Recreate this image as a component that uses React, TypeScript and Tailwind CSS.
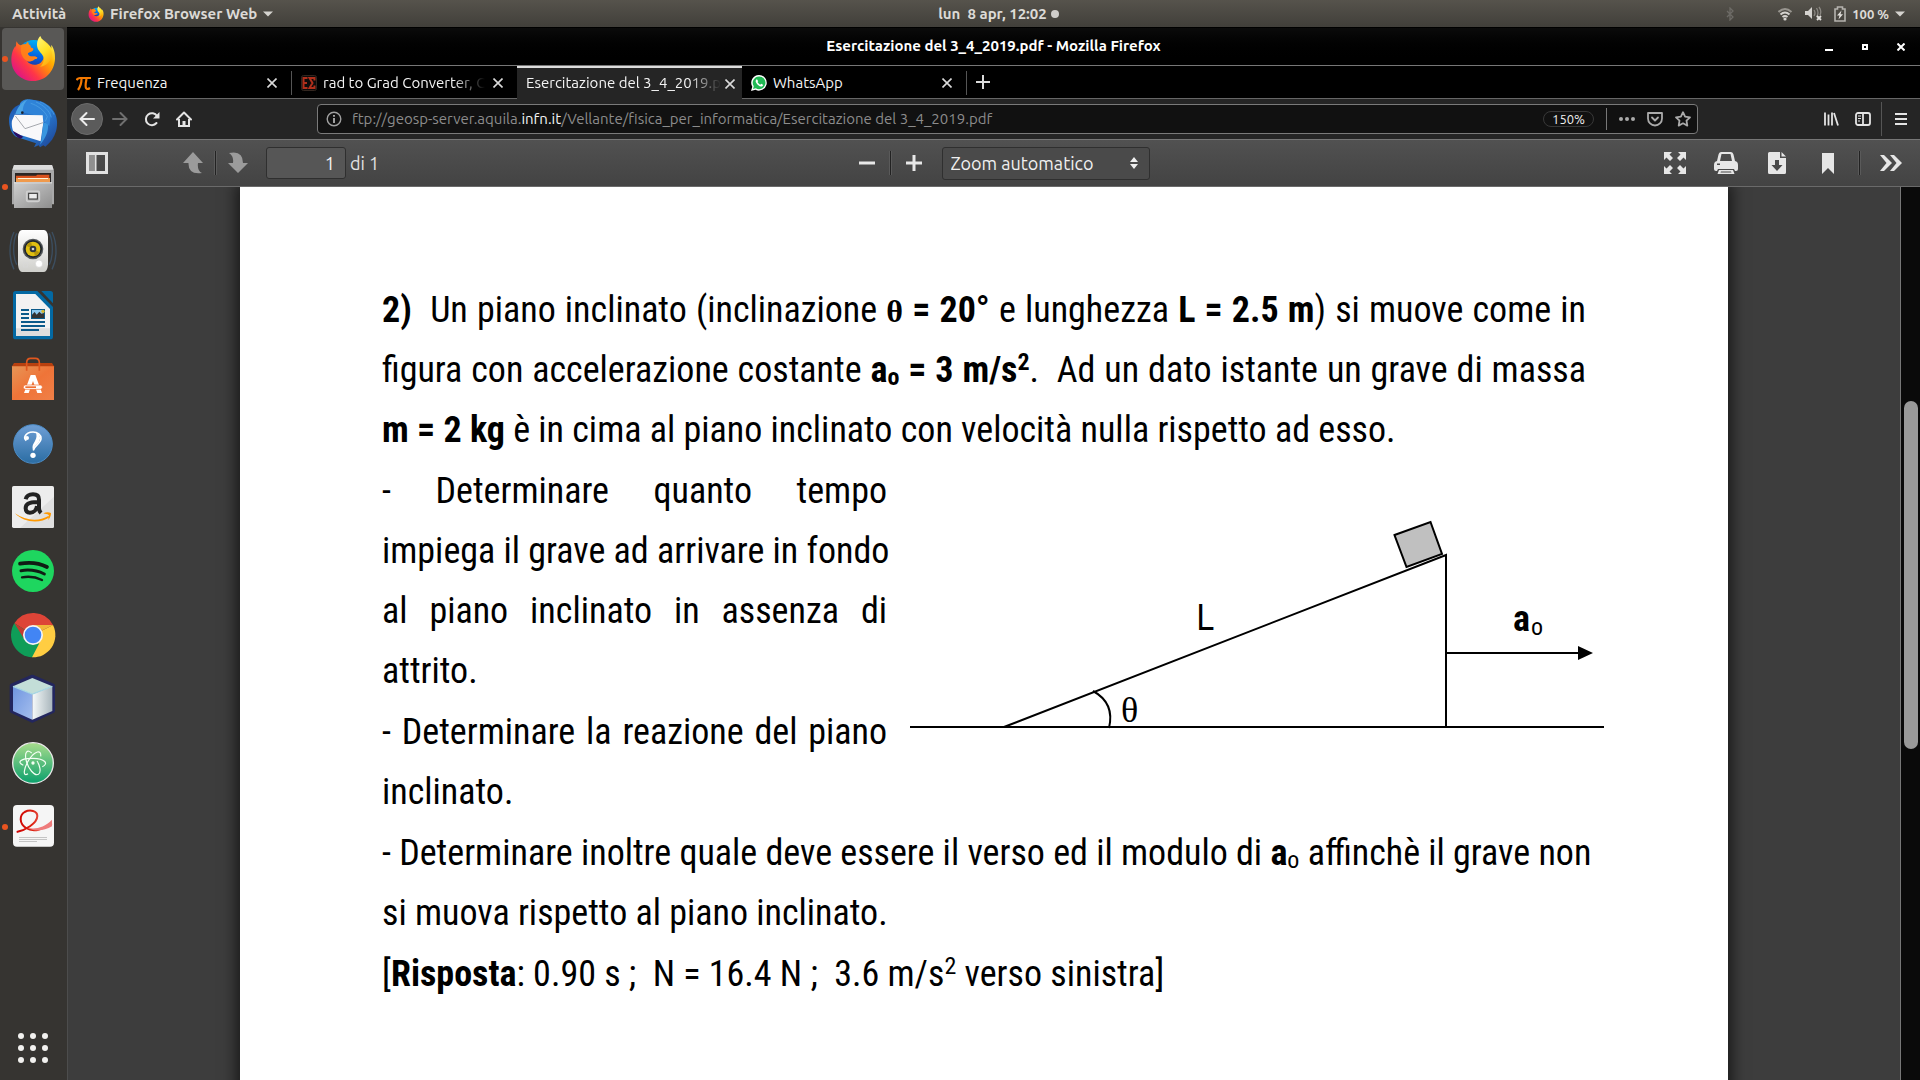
import React from 'react';

/* ---------- Dock icons ---------- */

const FirefoxShape = () => (
  <>
    <defs>
      <linearGradient id="ffBody" x1="1" y1="0.1" x2="0.1" y2="0.9">
        <stop offset="0.05" stopColor="#fff44f" />
        <stop offset="0.3" stopColor="#ffb000" />
        <stop offset="0.5" stopColor="#ff7a16" />
        <stop offset="0.7" stopColor="#ff3647" />
        <stop offset="1" stopColor="#d9108f" />
      </linearGradient>
      <linearGradient id="ffGlobe" x1="0.6" y1="0" x2="0.4" y2="1">
        <stop offset="0" stopColor="#00b3f4" />
        <stop offset="0.5" stopColor="#0560e0" />
        <stop offset="1" stopColor="#2b1a78" />
      </linearGradient>
      <linearGradient id="ffTail" x1="0.3" y1="0" x2="0.7" y2="1">
        <stop offset="0" stopColor="#fff36e" />
        <stop offset="0.5" stopColor="#ffe226" />
        <stop offset="1" stopColor="#ffa60e" />
      </linearGradient>
    </defs>
    <circle cx="101" cy="110" r="50" fill="url(#ffGlobe)" />
    <path
      d="M50 64c2 6 6 10 11 12 6-3 12-4 18-3-1-2 1-5 4-8 0 6 3 10 8 12-1 3 0 6 6 8 3 1 3 4 0 7-4 4-11 3-14 8 0 4 3 8 7 9 7 2 15-2 21 3 1 3-3 6-8 6-6 6-16 8-22 6 10 12 28 14 41 4 12-10 14-28 3-43 7 2 12 7 15 13-1-22-14-30-15-42 14 10 25 20 30 30-2-5-1-11-1-11 6 8 12 22 11 42-2 38-30 66-65 66-37 0-66-28-66-64 0-24 9-38 13-42 0 2 0 4 1 6 0-7 0-14 2-19z"
      fill="url(#ffBody)"
    />
    <path d="M64 76c8-4 15-3 18-3 0-3 2-6 3-7 0 6 3 9 7 11-1 3 0 6 6 8 3 1 3 4 0 7-4 4-11 3-14 8 0 4 3 8 7 9 7 2 15-2 21 3 1 3-3 6-8 6-6 6-14 8-22 5-14-6-24-25-18-47z" fill="#ff8418" opacity="0.85" />
    <path d="M121 48c-10 10-11 24-9 34 3 12 14 18 18 28 4 12-2 24-10 30 22-2 36-20 36-38-1-24-27-32-35-54z" fill="url(#ffTail)" />
  </>
);

const ThunderbirdIcon = () => (
  <>
    <defs>
      <linearGradient id="tb" x1="0" y1="0" x2="1" y2="1">
        <stop offset="0" stopColor="#1a4fa8" />
        <stop offset="0.5" stopColor="#2a7fd6" />
        <stop offset="1" stopColor="#1c3f8f" />
      </linearGradient>
    </defs>
    <path d="M82 240c30-4 62 8 78 32 12 16 14 40 8 62-5 18-16 34-32 46l-6-4-10 6-4-6-14 6 6-12-60-20c-12-8-22-28-21-54 1-10 5-24 19-36z" fill="url(#tb)" />
    <path d="M60 250c6-10 18-14 28-12 22 2 46 14 66 34l-6 46-20-16-28-18-40-8z" fill="#2f83d8" />
    <path d="M92 250c20 6 40 20 50 40l-6 14M108 246c24 10 40 26 46 46M120 246c20 8 34 20 42 38" fill="none" stroke="#4a9fe4" strokeWidth="2.500" />
    <path d="M44 284l84 2 2 22-8 56-78-24c-8-8-10-30-8-38z" fill="#f8f8fa" />
    <path d="M46 288l29 38 54-18" fill="none" stroke="#a5a8ae" strokeWidth="3" />
    <path d="M46 282c8-24 22-38 38-44-14 12-18 32-14 44z" fill="#4aa4e6" />
    <circle cx="67" cy="278" r="4" fill="#1b2230" />
    <path d="M38 332l32 18-8 6c-12-4-20-14-24-24z" fill="#2a0f66" />
    <path d="M130 310c6-2 10 0 14 4 2 20-8 42-24 60l4-14z" fill="#3996e0" />
  </>
);

const FilesIcon = () => (
  <>
    <defs>
      <linearGradient id="fl" x1="0" y1="0" x2="1" y2="1">
        <stop offset="0" stopColor="#cfcfcf" />
        <stop offset="1" stopColor="#8e8e8e" />
      </linearGradient>
    </defs>
    <path d="M42 435h114l6 18v100H36V453z" fill="#a9a9a9" />
    <path d="M42 435h114l5 14H37z" fill="#dcdcdc" />
    <rect x="45" y="459" width="108" height="30" fill="#2b2624" />
    <path d="M48 467h60l4-3h36v22H48z" fill="#d9531e" />
    <path d="M48 474h102v12H48z" fill="#f09a4c" />
    <rect x="54" y="474" width="90" height="3" fill="#fff4d8" />
    <path d="M42 487h114v77H42z" fill="url(#fl)" />
    <rect x="42" y="487" width="114" height="3" fill="#e6e6e6" />
    <rect x="80" y="514" width="38" height="30" rx="4" fill="none" stroke="#cfcfcf" strokeWidth="5" />
    <rect x="86" y="520" width="26" height="17" fill="#ececec" stroke="#333" strokeWidth="3" />
  </>
);

const RhythmboxIcon = () => (
  <>
    <defs>
      <linearGradient id="rb" x1="0" y1="0" x2="0" y2="1">
        <stop offset="0" stopColor="#ffffff" />
        <stop offset="1" stopColor="#cfcfcb" />
      </linearGradient>
    </defs>
    <path d="M42 636c-16 34-16 80 0 112M50 640c-12 24-12 70 0 94M156 636c16 34 16 80 0 112M148 640c12 24 12 70 0 94" fill="none" stroke="#3f5a75" strokeWidth="4" opacity="0.7" />
    <path d="M66 630h66q10 0 12 20v84q-2 22-14 22H68q-12 0-14-22v-84q2-20 12-20z" fill="url(#rb)" />
    <circle cx="99" cy="687" r="31" fill="#54585a" />
    <circle cx="99" cy="687" r="27" fill="#20262c" />
    <circle cx="99" cy="687" r="22" fill="#e0bf12" />
    <path d="M99 687l-20-10a22 22 0 0 1 14-11zM99 687l20 10a22 22 0 0 1-14 11z" fill="#b5960a" />
    <circle cx="99" cy="687" r="10" fill="#30363d" />
    <circle cx="99" cy="687" r="4" fill="#d0d4d8" />
    <circle cx="117" cy="731" r="11" fill="#fff" stroke="#d2d2d2" strokeWidth="2" />
    <rect x="70" y="728" width="13" height="13" fill="none" stroke="#d8d8d8" strokeWidth="2" />
  </>
);

const WriterIcon = () => (
  <>
    <path d="M47 813h65l47 48v89q0 8-8 8H47q-8 0-8-8V821q0-8 8-8z" fill="#0369a3" />
    <path d="M124 813h27q8 0 8 8v29z" fill="#0369a3" />
    <path d="M48 822h58l44 45v81H48z" fill="#f2f2f2" />
    <path d="M48 925h102v23H48z" fill="#dedede" />
    <g fill="#0b5a8a">
      <rect x="63" y="867" width="24" height="6" />
      <rect x="63" y="879" width="24" height="6" />
      <rect x="63" y="891" width="24" height="6" />
      <rect x="63" y="903" width="72" height="6" />
      <rect x="63" y="915" width="72" height="6" />
      <rect x="63" y="927" width="54" height="6" />
      <rect x="93" y="867" width="42" height="30" />
    </g>
    <rect x="96" y="870" width="36" height="24" fill="#8cc8ef" />
    <path d="M96 894v-10l8-8 6 8 8-9 6 6 8-2v15z" fill="#333" />
    <circle cx="129" cy="874" r="5" fill="#d9b92c" />
  </>
);

const SoftwareIcon = () => (
  <>
    <defs>
      <linearGradient id="sw" x1="0" y1="0" x2="1" y2="1">
        <stop offset="0" stopColor="#e79556" />
        <stop offset="0.5" stopColor="#ef7438" />
        <stop offset="1" stopColor="#f08048" />
      </linearGradient>
    </defs>
    <path d="M36 79l6-10h114l6 10v6H36z" fill="#b8400f" />
    <path d="M36 79h126v101H36z" fill="url(#sw)" />
    <path d="M80 92V68q0-13 12-13h14q12 0 12 13v24" fill="none" stroke="#e0571e" strokeWidth="5" />
    <path d="M92 105h14l20 54h-14l-13-36-13 36H72z" fill="#fff" />
    <rect x="70" y="135" width="57" height="13" rx="6" fill="#fff" stroke="#ef7033" strokeWidth="2" />
    <rect x="76" y="139" width="32" height="5" fill="#ef7033" />
  </>
);

const HelpIcon = () => (
  <>
    <defs>
      <linearGradient id="hp" x1="0" y1="0" x2="0" y2="1">
        <stop offset="0" stopColor="#6f9fd6" />
        <stop offset="1" stopColor="#2b6da3" />
      </linearGradient>
    </defs>
    <circle cx="99" cy="312" r="58" fill="url(#hp)" stroke="#4c8cc6" strokeWidth="3" />
    <path d="M79 302q-7-6-4-13c4-9 13-13 24-13 14 0 24 8 24 19 0 16-19 20-23 36" fill="none" stroke="#fff" strokeWidth="5" />
    <path d="M108 279c14 2 16 20 6 30-7 7-13 12-14 24-6-16 1-22 5-30 6-10 5-18 3-24z" fill="#fff" />
    <circle cx="81" cy="294" r="6" fill="#fff" />
    <circle cx="99" cy="346" r="8" fill="#fff" />
  </>
);

const AmazonIcon = () => (
  <>
    <rect x="36" y="438" width="126" height="126" rx="5" fill="#ededed" />
    <path d="M162 470v89q0 5-5 5H60z" fill="#e0e0e0" />
    <path d="M77 478c3-12 12-15 22-15 12 0 18 6 18 16v26c0 7 2 10 6 14M111 486c-18 0-34 3-34 18 0 10 6 14 13 14 12 0 20-9 21-20" fill="none" stroke="#222" strokeWidth="12" />
    <path d="M45 520c30 22 72 25 100 8l4 4c-30 20-78 16-104-12z" fill="#ff9900" />
    <path d="M130 520c8-4 16-4 23-1 0 8-3 15-9 21 2-6 4-11 2-15-4-3-10-3-16-5z" fill="#ff9900" />
  </>
);

const SpotifyIcon = () => (
  <>
    <circle cx="99" cy="693" r="63" fill="#1ed65f" />
    <g fill="none" stroke="#101c14" strokeLinecap="round">
      <path d="M60 671q46-8 81 10" strokeWidth="11" />
      <path d="M63 692q38-6 70 10" strokeWidth="9" />
      <path d="M66 712q32-6 60 8" strokeWidth="7" />
    </g>
  </>
);

const ChromeIcon = () => (
  <>
    <path d="M99 885L43 850A67 67 0 0 1 159 855z" fill="#dd4437" />
    <path d="M99 885L159 855A67 67 0 0 1 96 952z" fill="#ffcd42" />
    <path d="M99 885L96 952A67 67 0 0 1 43 850z" fill="#0f9d58" />
    <path d="M43 850L72 896l27-11z" fill="#c33a2e" />
    <path d="M96 952l29-54-26-13z" fill="#ffcd42" />
    <path d="M96 952l22-42-30 5-14-13z" fill="#0f9d58" />
    <path d="M99 855h60l-32 16z" fill="#f0b93a" />
    <circle cx="99" cy="885" r="30" fill="#f4f4f4" />
    <circle cx="99" cy="885" r="25" fill="#4285f4" />
  </>
);

const CubeIcon = () => (
  <>
    <defs>
      <linearGradient id="cl" x1="0" y1="0" x2="1" y2="1">
        <stop offset="0" stopColor="#6f95e0" />
        <stop offset="1" stopColor="#a5bfee" />
      </linearGradient>
      <linearGradient id="cr" x1="0" y1="0" x2="1" y2="0">
        <stop offset="0" stopColor="#f6fafa" />
        <stop offset="1" stopColor="#a9b6bc" />
      </linearGradient>
    </defs>
    <path d="M97 50l62 27v76l-62 29-62-29V77z" fill="#23265e" stroke="#23265e" strokeWidth="12" strokeLinejoin="round" />
    <path d="M97 54l60 25-60 24-58-24z" fill="#c3ded8" />
    <path d="M39 79l58 24v76l-58-26z" fill="url(#cl)" />
    <path d="M157 79l-60 24v76l60-26z" fill="url(#cr)" />
    <path d="M39 79l58 23 60-23" fill="none" stroke="#a8d8e4" strokeWidth="4" />
  </>
);

const AtomIcon = () => (
  <>
    <defs>
      <linearGradient id="at" x1="0" y1="0" x2="0" y2="1">
        <stop offset="0" stopColor="#a8dc8c" />
        <stop offset="1" stopColor="#0ba06c" />
      </linearGradient>
    </defs>
    <circle cx="99" cy="309" r="61" fill="url(#at)" stroke="#ebe9ea" strokeWidth="4" />
    <g fill="none" stroke="#f4fff4" strokeWidth="3.500">
      <path d="M70 316c-22-10-6-22 29-21 36 1 48 16 28 25" />
      <path d="M84 341c-18 12-12-18 3-42 17-26 38-32 35-10" />
      <path d="M95 279c-12-12-22-4-17 20 6 28 26 50 37 44 10-6 4-28-4-40" />
    </g>
    <circle cx="99" cy="309" r="5" fill="#f4fff4" />
  </>
);

const EvinceIcon = () => (
  <>
    <defs>
      <linearGradient id="ev" x1="0" y1="0" x2="1" y2="0">
        <stop offset="0" stopColor="#c00" />
        <stop offset="0.45" stopColor="#d21" />
        <stop offset="1" stopColor="#f2a0a0" />
      </linearGradient>
    </defs>
    <rect x="39" y="435" width="123" height="125" rx="12" fill="#f5f5f5" />
    <path d="M50 516c24-4 62-26 62-48 0-16-22-20-38-12-16 10-17 34 4 48 22 14 54 4 78-14" fill="none" stroke="url(#ev)" strokeWidth="6" />
    <path d="M82 503c24 6 50 0 74-24v20c-22 12-50 18-74 4z" fill="#ee7b7b" />
    <g fill="#c4c4c4">
      <rect x="57" y="531" width="84" height="3" />
      <rect x="57" y="537" width="84" height="3" />
      <rect x="57" y="543" width="54" height="3" />
    </g>
  </>
);

const DOCK: { name: string; view: string; icon: React.ReactNode; running?: boolean; active?: boolean }[] = [
  { name: 'Firefox', view: '27 45 144 144', icon: <FirefoxShape />, running: true, active: true },
  { name: 'Thunderbird', view: '27 237 144 144', icon: <ThunderbirdIcon /> },
  { name: 'File', view: '27 429 144 144', icon: <FilesIcon />, running: true },
  { name: 'Rhythmbox', view: '27 621 144 144', icon: <RhythmboxIcon /> },
  { name: 'LibreOffice Writer', view: '27 813 144 144', icon: <WriterIcon /> },
  { name: 'Ubuntu Software', view: '27 45 144 144', icon: <SoftwareIcon /> },
  { name: 'Aiuto', view: '27 237 144 144', icon: <HelpIcon /> },
  { name: 'Amazon', view: '27 429 144 144', icon: <AmazonIcon /> },
  { name: 'Spotify', view: '27 621 144 144', icon: <SpotifyIcon /> },
  { name: 'Chrome', view: '27 813 144 144', icon: <ChromeIcon /> },
  { name: 'NetBeans', view: '27 45 144 144', icon: <CubeIcon /> },
  { name: 'Atom', view: '27 237 144 144', icon: <AtomIcon /> },
  { name: 'Visualizzatore di documenti', view: '27 429 144 144', icon: <EvinceIcon />, running: true },
];

function Dock() {
  return (
    <nav aria-label="Dock" className="flex w-[67px] shrink-0 flex-col gap-0.5 bg-[#363431] pt-px pb-px pl-0.5">
      {DOCK.map((d) => (
        <button
          key={d.name}
          aria-label={d.name}
          className={
            d.active
              ? 'relative flex size-[62px] items-center justify-center rounded-[4px] bg-[#595856]'
              : 'relative flex size-[62px] items-center justify-center rounded-[4px]'
          }
        >
          {d.running && <span className="absolute top-7 left-0 size-1.5 rounded-full bg-[#e95420]" />}
          <svg viewBox={d.view} className="size-12 overflow-visible">
            {d.icon}
          </svg>
        </button>
      ))}
      <button aria-label="Mostra applicazioni" className="mt-auto flex size-[62px] items-center justify-center">
        <svg viewBox="0 0 30 30" className="size-[30px]" fill="#f2f1ef">
          {[3, 15, 27].map((y) => [3, 15, 27].map((x) => <circle key={x + '-' + y} cx={x} cy={y} r="3" />))}
        </svg>
      </button>
    </nav>
  );
}

/* ---------- Top bar ---------- */

const Caret = () => (
  <svg viewBox="0 0 10 6" className="h-1.5 w-2.5" fill="#d5d3cf">
    <path d="M0 0.500h10L5 5.500z" />
  </svg>
);

function TopBar() {
  return (
    <header className="grid h-[27px] shrink-0 grid-cols-[1fr_auto_1fr] items-center bg-linear-to-b from-[#56534c] to-[#413f3a] pr-[15px] pl-3 text-[15px] leading-5 font-bold text-[#dcdad6]">
      <div className="flex items-center">
        <button className="cursor-default">Attività</button>
        <button className="ml-[22px] flex items-center">
          <svg viewBox="30 45 138 140" className="mr-1.5 size-4">
            <FirefoxShape />
          </svg>
          Firefox Browser Web
          <span className="ml-1.5">
            <Caret />
          </span>
        </button>
      </div>
      <button className="ml-20 flex items-center gap-1 whitespace-pre">
        lun  8 apr, 12:02
        <span className="size-2 rounded-full bg-[#cfcdca]" />
      </button>
      <div className="flex items-center justify-end">
        <svg viewBox="0 0 8 14" className="mr-[43px] h-3.5 w-2" fill="none" stroke="#6d6b66" strokeWidth="1.300">
          <path d="M1 4l6 6-3 3V1l3 3-6 6" />
        </svg>
        <svg viewBox="0 0 16 14" className="mr-3 h-3.5 w-4" fill="none" stroke="#d5d3cf" strokeWidth="2">
          <path d="M1.500 5q6.500-6 13 0" stroke="#98958f" />
          <path d="M3.500 7.500q4.500-4 9 0" />
          <path d="M5.500 10q2.500-2 5 0" />
          <circle cx="8" cy="12" r="1.600" fill="#d5d3cf" stroke="none" />
        </svg>
        <svg viewBox="0 0 17 15" className="mr-3 h-[15px] w-[17px]" fill="none">
          <path d="M0 5h3l4-4v12L3 9H0z" fill="#d5d3cf" />
          <path d="M9 4q2 3 0 6M11.500 2q3 5 0 9M14 1q3 4 1 8" stroke="#8b8882" strokeWidth="1.300" />
          <path d="M12 10l4 4M16 10l-4 4" stroke="#e2e0dc" strokeWidth="1.800" />
        </svg>
        <svg viewBox="0 0 12 16" className="mr-1.5 h-4 w-3" fill="none">
          <path d="M1 3h2.500V1h5v2H11v12H1z" stroke="#b5b3ae" strokeWidth="1.600" />
          <path d="M7.500 4.500L3 9.500h2.500l-1 4L9 8.300H6.500z" fill="#e2e0dc" />
        </svg>
        <span className="mr-1.5 text-[13px] whitespace-nowrap">100 %</span>
        <Caret />
      </div>
    </header>
  );
}

/* ---------- Firefox window ---------- */

function TitleBar() {
  return (
    <div className="relative flex h-[38px] items-center justify-center border-t border-black bg-linear-to-b from-[#0b0b0b] to-black text-[15px] font-bold text-white">
      <h1>Esercitazione del 3_4_2019.pdf - Mozilla Firefox</h1>
      <div className="absolute right-[3px] flex items-center gap-1">
        <button aria-label="Riduci" className="flex size-8 items-center justify-center">
          <svg viewBox="0 0 10 10" className="size-2.5" fill="#fff"><path d="M1 7h8v2H1z" /></svg>
        </button>
        <button aria-label="Massimizza" className="flex size-8 items-center justify-center">
          <svg viewBox="0 0 6 6" className="size-1.5" fill="none" stroke="#fff" strokeWidth="2"><path d="M1 1h4v4H1z" /></svg>
        </button>
        <button aria-label="Chiudi" className="flex size-8 items-center justify-center">
          <svg viewBox="0 0 8 8" className="size-2" stroke="#fff" strokeWidth="2"><path d="M0.500 0.500l7 7M7.500 0.500l-7 7" /></svg>
        </button>
      </div>
    </div>
  );
}

const PiIcon = () => (
  <svg viewBox="0 0 15 15" className="size-[15px] shrink-0" fill="none" stroke="#f57900" strokeWidth="2.200">
    <path d="M0.500 4Q2 2 4 2h11M5.500 3Q5.500 9 2 14M10.500 3Q9 10 10 12t4 0" />
  </svg>
);

const ExIcon = () => (
  <svg viewBox="0 0 16 16" className="size-4 shrink-0">
    <rect x="0.500" y="0.500" width="15" height="15" rx="2" fill="#0c0c0c" stroke="#33261f" />
    <path d="M6.500 3h-4v10h4M2.500 8h3.500M13.500 5.500V3H8.500l3 5-3 5h5v-2.500" fill="none" stroke="#b02f1b" strokeWidth="2" />
  </svg>
);

const WhatsIcon = () => (
  <svg viewBox="0 0 16 16" className="size-4 shrink-0">
    <path d="M8.200 0A7.800 7.800 0 0 0 1.300 11.700L0 16l4.500-1.200A7.800 7.800 0 1 0 8.200 0z" fill="#fff" />
    <path d="M8.200 1.400a6.400 6.400 0 0 0-5.400 9.900L2 14l2.800-.7a6.400 6.400 0 1 0 3.400-11.900z" fill="#20b954" />
    <path d="M6 4.200c-1.500.6-1.700 2-.8 3.600 1.200 2.200 3 3.500 4.900 3.800 1.300 0 2-.9 1.900-1.900L10.200 8.800l-.9 1C8 9.300 7.100 8.300 6.500 7.100l.7-.9z" fill="#fff" />
  </svg>
);

const TABS: { label: string; icon?: React.ReactNode; active?: boolean; sep?: boolean; faded?: boolean }[] = [
  { label: 'Frequenza', icon: <PiIcon />, sep: true },
  { label: 'rad to Grad Converter, C', icon: <ExIcon />, faded: true },
  { label: 'Esercitazione del 3_4_2019.p', active: true, faded: true },
  { label: 'WhatsApp', icon: <WhatsIcon />, sep: true },
];

function TabBar() {
  return (
    <div role="tablist" className="flex h-[34px] border-t border-[#777] bg-black text-[15px] text-[#f4f4f4]">
      {TABS.map((t) => (
        <div
          key={t.label}
          className={
            t.active
              ? 'flex w-[225px] shrink-0 items-center border-t-2 border-[#dcdcdc] bg-[#252525]'
              : 'flex w-[225px] shrink-0 items-center border-t-2 border-b border-t-transparent border-b-[#666]'
          }
        >
          <button role="tab" aria-selected={!!t.active} className="flex h-full flex-1 items-center gap-1.5 pl-[9px]">
            {t.icon}
            <span
              className={
                t.faded
                  ? 'mask-[linear-gradient(to_right,black_calc(100%-32px),transparent)] text-left whitespace-nowrap'
                  : 'text-left whitespace-nowrap'
              }
            >
              {t.label}
            </span>
          </button>
          <button aria-label={'Chiudi ' + t.label} className="flex h-full w-[28px] items-center pl-1">
            <svg viewBox="0 0 10 10" className="size-2.5" stroke="#dadada" strokeWidth="1.600"><path d="M0.500 0.500l9 9M9.500 0.500l-9 9" /></svg>
          </button>
          {t.sep && <span className="h-6 w-px bg-[#555]" />}
        </div>
      ))}
      <div className="flex flex-1 border-b border-[#666]">
        <button aria-label="Nuova scheda" className="flex w-8 items-center justify-center">
          <svg viewBox="0 0 14 14" className="size-3.5" stroke="#dadada" strokeWidth="2"><path d="M7 0v14M0 7h14" /></svg>
        </button>
      </div>
    </div>
  );
}

const IconBtn = ({ label, children, className = '' }: { label: string; children: React.ReactNode; className?: string }) => (
  <button aria-label={label} className={'flex size-8 shrink-0 items-center justify-center ' + className}>
    {children}
  </button>
);

function NavBar() {
  return (
    <div className="flex h-[41px] items-center border-b border-[#777] bg-[#252525] pr-[3px] pl-1">
      <IconBtn label="Indietro" className="rounded-full border border-[#6c6c6c] bg-[#5b5b5b]">
        <svg viewBox="0 0 16 16" className="size-4" fill="none" stroke="#ececec" strokeWidth="2" strokeLinecap="round"><path d="M15 8H2M7.500 2L1.500 8l6 6" /></svg>
      </IconBtn>
      <IconBtn label="Avanti" className="ml-px">
        <svg viewBox="0 0 16 16" className="size-4" fill="none" stroke="#6f6f6f" strokeWidth="2" strokeLinecap="round"><path d="M1 8h13M8.500 2l6 6-6 6" /></svg>
      </IconBtn>
      <IconBtn label="Ricarica">
        <svg viewBox="0 0 16 16" className="size-4" fill="none" stroke="#e4e4e4" strokeWidth="2"><path d="M12.500 12A6 6 0 1 1 13 5" strokeLinecap="round" /><path d="M15.500 1v6.500H9z" fill="#e4e4e4" stroke="none" /></svg>
      </IconBtn>
      <IconBtn label="Pagina iniziale">
        <svg viewBox="0 0 16 16" className="size-4" fill="none" stroke="#e4e4e4" strokeWidth="2"><path d="M1 8.500L8 1.500l7 7" strokeLinecap="round" strokeLinejoin="round" /><path d="M3 8v7h10V8" /><path d="M8 14.500V10" strokeWidth="3" /></svg>
      </IconBtn>
      <div className="mx-[117px] flex h-[30px] flex-1 items-center rounded-[4px] border border-[#7a7a7a] bg-[#111]">
        <svg viewBox="0 0 16 16" className="ml-2 size-4 shrink-0" fill="none" stroke="#a0a0a0" strokeWidth="1.400"><circle cx="8" cy="8" r="6.800" /><path d="M8 7v5M8 4v1.800" strokeWidth="2" /></svg>
        <a href="ftp://geosp-server.aquila.infn.it/" className="ml-2.5 flex-1 text-[15px] whitespace-nowrap text-[#8c8c8c]">
          ftp://geosp-server.aquila.<span className="text-[#f4f4f4]">infn.it</span>/Vellante/fisica_per_informatica/Esercitazione del 3_4_2019.pdf
        </a>
        <button className="mr-3 h-4 rounded-full border border-[#383838] px-2 text-[13px] leading-[14px] text-[#f0f0f0]">150%</button>
        <span className="h-[22px] w-px bg-[#777]" />
        <button aria-label="Azioni" className="ml-3 flex h-7 w-4 items-center justify-center">
          <svg viewBox="0 0 16 4" className="h-1 w-4" fill="#aaa"><circle cx="2" cy="2" r="2" /><circle cx="8" cy="2" r="2" /><circle cx="14" cy="2" r="2" /></svg>
        </button>
        <button aria-label="Salva in Pocket" className="ml-3 flex h-7 w-4 items-center justify-center">
          <svg viewBox="0 0 16 16" className="size-4" fill="none" stroke="#aaa" strokeWidth="1.800" strokeLinecap="round" strokeLinejoin="round"><path d="M1 2h14v5.500a7 7 0 0 1-14 0z" /><path d="M5 6.500l3 3 3-3" /></svg>
        </button>
        <button aria-label="Aggiungi ai segnalibri" className="mr-1.5 ml-3 flex h-7 w-4 items-center justify-center">
          <svg viewBox="0 0 16 16" className="size-4" fill="none" stroke="#aaa" strokeWidth="1.800" strokeLinejoin="round"><path d="M8 1.200l2.100 4.400 4.900.7-3.500 3.400.8 4.900L8 12.300l-4.300 2.300.8-4.900L1 6.300l4.900-.7z" /></svg>
        </button>
      </div>
      <IconBtn label="Libreria">
        <svg viewBox="0 0 16 16" className="size-4" fill="none" stroke="#e4e4e4" strokeWidth="1.800"><path d="M2 1.500v13M5.500 3.500v11M9 1.500v13M11 2l4 12.500" /></svg>
      </IconBtn>
      <IconBtn label="Barra laterale">
        <svg viewBox="0 0 16 14" className="h-3.5 w-4" fill="none" stroke="#e4e4e4" strokeWidth="1.800"><rect x="1" y="1" width="14" height="12" rx="2" /><path d="M8 1v12" /><path d="M3 4h3M3 6.500h3M3 9h2" strokeWidth="1.200" /></svg>
      </IconBtn>
      <span className="mr-[3px] ml-0.5 h-[34px] w-px bg-[#555]" />
      <IconBtn label="Menu">
        <svg viewBox="0 0 14 12" className="h-3 w-3.5" fill="#e4e4e4"><path d="M1 0h12v2H1zM1 5h12v2H1zM1 10h12v2H1z" /></svg>
      </IconBtn>
    </div>
  );
}

const Split = ({ className = '' }: { className?: string }) => (
  <span className={'h-6 w-[3px] border-x border-x-[#5a5a5a] bg-[#222] ' + className} />
);

function PdfToolbar() {
  return (
    <div className="z-10 flex h-[47px] items-center border-b border-[#6a6a6a] bg-linear-to-b from-[#515151] to-[#434343] text-lg text-[#e2e2e2]">
      <div className="flex flex-1 items-center">
        <IconBtn label="Mostra/nascondi barra laterale" className="ml-3.5">
          <svg viewBox="0 0 22 22" className="size-[22px]" fill="none" stroke="#e2e2e2"><rect x="1.500" y="1.500" width="19" height="19" strokeWidth="3" /><path d="M3 3h5v16H3z" fill="#909090" stroke="none" /><path d="M9.500 2v18" strokeWidth="2" /></svg>
        </IconBtn>
        <IconBtn label="Pagina precedente" className="ml-16">
          <svg viewBox="0 0 20 22" className="h-[22px] w-5" fill="#9b9b9b"><path d="M10 0l10 11h-5q-1 8 4 10Q5 23 5.500 11H0z" /></svg>
        </IconBtn>
        <Split className="ml-[5px]" />
        <IconBtn label="Pagina successiva" className="ml-[5px]">
          <svg viewBox="0 0 20 22" className="h-[22px] w-5" fill="#9b9b9b"><path d="M10 21L0 11h5Q6 4 1 1q14-3 14 10h5z" /></svg>
        </IconBtn>
        <input
          aria-label="Pagina"
          defaultValue="1"
          className="ml-3 h-8 w-20 rounded-[3px] border border-[#2f2f2f] bg-[#565656] pr-2.5 text-right text-lg text-[#f2f2f2]"
        />
        <span className="ml-1">di 1</span>
      </div>
      <div className="flex items-center pl-[26px]">
        <IconBtn label="Riduci zoom">
          <svg viewBox="0 0 16 16" className="size-4" fill="#e8e8e8"><path d="M0 6.500h16v3H0z" /></svg>
        </IconBtn>
        <Split className="mx-1.5" />
        <IconBtn label="Aumenta zoom">
          <svg viewBox="0 0 16 16" className="size-4" fill="#e8e8e8"><path d="M0 6.500h6.500V0h3v6.500H16v3H9.500V16h-3V9.500H0z" /></svg>
        </IconBtn>
        <div className="relative ml-3">
          <select
            aria-label="Zoom"
            className="block h-[33px] w-52 appearance-none rounded-[3px] border border-[#2f2f2f] bg-[#4a4a4a] pl-2 text-lg leading-6 text-[#f0f0f0]"
          >
            <option>Zoom automatico</option>
          </select>
          <svg viewBox="0 0 8 12" className="pointer-events-none absolute top-2.5 right-3 h-3 w-2" fill="#eee"><path d="M4 0l4 5H0zM4 12l4-5H0z" /></svg>
        </div>
      </div>
      <div className="flex flex-1 items-center justify-end pr-[13px]">
        <IconBtn label="Modalità presentazione">
          <svg viewBox="0 0 22 22" className="size-[22px]" fill="#e6e6e6"><path d="M0 0h8L5.500 2.500 9 6 6 9 2.500 5.500 0 8zM22 0v8l-2.500-2.500L16 9l-3-3 3.500-3.500L14 0zM0 22v-8l2.500 2.500L6 13l3 3-3.500 3.500L8 22zM22 22h-8l2.500-2.500L13 16l3-3 3.500 3.500L22 14z" /></svg>
        </IconBtn>
        <IconBtn label="Stampa" className="ml-[19px]">
          <svg viewBox="0 0 24 22" className="h-[22px] w-6" fill="#e6e6e6"><path d="M7 0h10q2 0 2.500 2.500L21 9q3 .5 3 4v4q0 2-2 2h-1l-1-2H4l-1 2H2q-2 0-2-2v-4q0-3.500 3-4l1.500-6.500Q5 0 7 0zM7.500 2L6 9h12l-1.500-7zM3 11.500v1.500h3v-1.500z" fillRule="evenodd" /><path d="M5 18h14l1.500 4h-17zM7 19.500l-.5 1h11l-.5-1z" fillRule="evenodd" /></svg>
        </IconBtn>
        <IconBtn label="Scarica" className="ml-[19px]">
          <svg viewBox="0 0 18 22" className="h-[22px] w-[18px]" fill="#e6e6e6"><path d="M1.500 0H12v6h6v14.500q0 1.500-1.500 1.500h-15Q0 22 0 20.500v-19Q0 0 1.500 0zM7 8v5H3.500L9 19l5.500-6H11V8z" fillRule="evenodd" /><path d="M13.500 0L18 4.500h-4.500z" /></svg>
        </IconBtn>
        <IconBtn label="Vista corrente" className="ml-[19px]">
          <svg viewBox="0 0 12 21" className="h-[21px] w-3" fill="#e6e6e6"><path d="M0 0h12v21l-6-6-6 6z" /></svg>
        </IconBtn>
        <Split className="ml-3.5" />
        <IconBtn label="Strumenti" className="ml-3.5">
          <svg viewBox="0 0 22 16" className="h-4 w-[22px]" fill="#e6e6e6"><path d="M0 0h4l8 8-8 8H0l6.500-8zM10 0h4l8 8-8 8h-4l6.500-8z" /></svg>
        </IconBtn>
      </div>
    </div>
  );
}

/* ---------- Document ---------- */

const Full = ({ children }: { children: React.ReactNode }) => (
  <span className="block [text-align-last:justify] whitespace-nowrap">{children}</span>
);
const Line = ({ children }: { children: React.ReactNode }) => <span className="block whitespace-nowrap">{children}</span>;
const Sub = ({ children }: { children: React.ReactNode }) => <sub className="bottom-[-3px] text-[24px]">{children}</sub>;
const Sup = ({ children }: { children: React.ReactNode }) => <sup className="top-[-12px] text-[24px]">{children}</sup>;

function Figure() {
  return (
    <svg viewBox="900 460 710 360" className="-mr-6 h-[360px] w-[710px] shrink-0" role="img" aria-label="Piano inclinato">
      <g fill="none" stroke="#000" strokeWidth="2">
        <path d="M910 726h694" />
        <path d="M1004 726L1446 554v172" />
        <path d="M1093 690q22 12 16 37" />
        <path d="M1394.500 534L1430.500 521l11.500 32-35.500 13z" fill="#c0c0c0" />
        <path d="M1446 652h136" />
      </g>
      <path d="M1578 645l15 7-15 7z" />
      <text x="1196" y="629" fontSize="35" className="font-['DejaVu_Sans_Condensed','DejaVu_Sans',sans-serif]">L</text>
      <text x="1121" y="721" fontSize="36" className="font-['Liberation_Serif',serif]">θ</text>
      <text x="1513" y="630" fontSize="36" fontWeight="700">a</text>
      <text x="1531" y="634" fontSize="24">o</text>
    </svg>
  );
}

function Page() {
  return (
    <article className="flex min-h-[1060px] w-[1488px] flex-col gap-px bg-white px-[142px] pt-[93px] font-['Roboto_Condensed','DejaVu_Sans_Condensed',sans-serif] text-[36px] leading-[60px] text-black shadow-[0_0_14px_4px_rgba(0,0,0,0.6)]">
      <p>
        <Full>
          <b>2)</b>&nbsp; Un piano inclinato (inclinazione <b className="font-['Liberation_Serif',serif] text-[32px] leading-none">θ</b>
          <b> = 20°</b> e lunghezza <b>L = 2.5 m</b>) si muove come in
        </Full>
        <Full>
          figura con accelerazione costante <b>a<Sub>o</Sub> = 3 m/s<Sup>2</Sup></b>.&nbsp; Ad un dato istante un grave di massa
        </Full>
        <Line>
          <b>m = 2 kg</b> è in cima al piano inclinato con velocità nulla rispetto ad esso.
        </Line>
      </p>
      <div className="flex justify-between">
        <div className="flex w-[505px] flex-col gap-px">
          <p>
            <Full>- Determinare quanto tempo</Full>
            <Full>impiega il grave ad arrivare in fondo</Full>
            <Full>al piano inclinato in assenza di</Full>
            <Line>attrito.</Line>
          </p>
          <p>
            <Full>- Determinare la reazione del piano</Full>
            <Line>inclinato.</Line>
          </p>
        </div>
        <Figure />
      </div>
      <p>
        <Full>
          - Determinare inoltre quale deve essere il verso ed il modulo di <b>a</b>
          <Sub>o</Sub> affinchè il grave non
        </Full>
        <Line>si muova rispetto al piano inclinato.</Line>
      </p>
      <p>
        <Line>
          [<b>Risposta</b>: 0.90 s ;&nbsp; N = 16.4 N ;&nbsp; 3.6 m/s<Sup>2</Sup> verso sinistra]
        </Line>
      </p>
    </article>
  );
}

export default function App() {
  return (
    <div className="flex h-screen flex-col overflow-hidden bg-black font-['Ubuntu','Noto_Sans',sans-serif]">
      <TopBar />
      <div className="flex min-h-0 flex-1">
        <Dock />
        <div className="flex min-w-0 flex-1 flex-col">
          <TitleBar />
          <TabBar />
          <NavBar />
          <PdfToolbar />
          <div className="flex min-h-0 flex-1">
            <main className="flex min-w-0 flex-1 justify-center overflow-hidden border-l border-[#4d4d4d] bg-[#3d3d3d]">
              <Page />
            </main>
            <div className="flex w-5 flex-col items-center border-l border-[#777] bg-[#0a0a0a] pt-[214px]">
              <div className="h-[348px] w-3.5 rounded-full bg-[#999]" />
            </div>
          </div>
        </div>
      </div>
    </div>
  );
}
